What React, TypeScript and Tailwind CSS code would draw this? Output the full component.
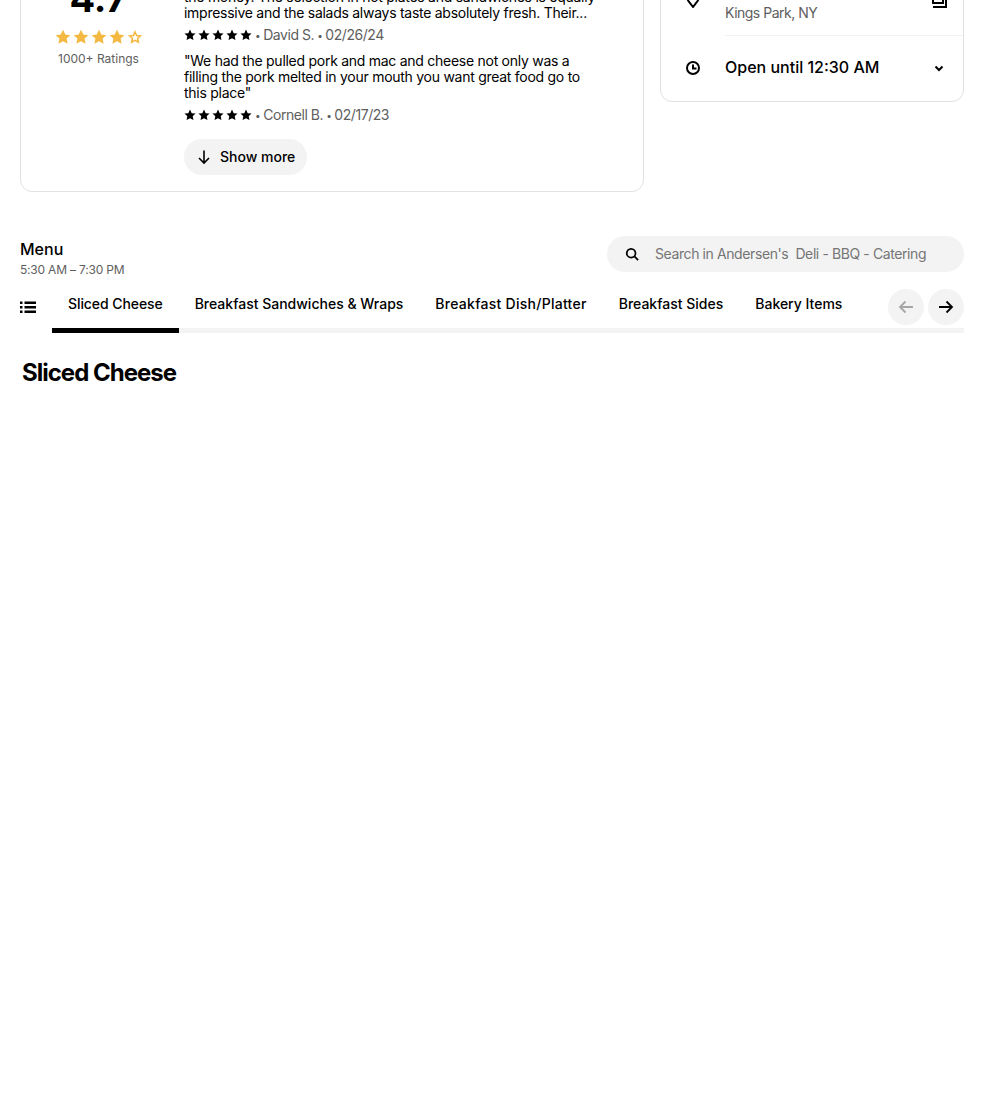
const Star = ({ className }: { className: string }) => (
  <svg viewBox="0 0 24 24" className={className} fill="currentColor">
    <path d="M12 1l3.400 7.300 7.600.9-5.600 5.200 1.500 7.800L12 18.300 5.100 22.200l1.500-7.800L1 9.200l7.600-.9z" />
  </svg>
);

const Meta = ({ name, date }: { name: string; date: string }) => (
  <div className="flex items-center h-4 mt-[6px] text-sm tracking-[-0.45px] text-[#5e5e5e]">
    <div className="flex gap-[2px] text-black">
      {[0, 1, 2, 3, 4].map((i) => (
        <Star key={i} className="w-3 h-3" />
      ))}
    </div>
    <span className="ml-[3px] mr-[3px] text-[10px]">•</span>
    <span>{name}</span>
    <span className="ml-[3px] mr-[3px] text-[10px]">•</span>
    <span>{date}</span>
  </div>
);

const tabs = ["Sliced Cheese", "Breakfast Sandwiches & Wraps", "Breakfast Dish/Platter", "Breakfast Sides", "Bakery Items"];

export default function App() {
  return (
    <div className="h-[1102px] overflow-hidden bg-white text-black font-['Inter','Liberation_Sans',sans-serif]">
      <div className="-mt-[60px] px-5">
        <div className="flex items-start gap-4">
          <div className="flex w-[624px] h-[252px] border border-[#e2e2e2] rounded-xl">
            <div className="w-[155px] shrink-0 flex flex-col items-center pt-[27px]">
              <div className="text-[38px] leading-[60px] font-bold">4.7</div>
              <div className="flex gap-[2px] mt-[1px] text-[#f4b942]">
                {[0, 1, 2, 3].map((i) => (
                  <Star key={i} className="w-4 h-4" />
                ))}
                <svg viewBox="0 0 24 24" className="w-4 h-4" fill="none" stroke="currentColor" strokeWidth="2.4">
                  <path d="M12 4.5l2.4 5.3 5.6.6-4.1 3.8 1.1 5.700L12 17.1l-5 2.8 1.1-5.7L4 10.400l5.600-.6z" />
                </svg>
              </div>
              <div className="mt-[6px] text-xs leading-4 text-[#5e5e5e]">1000+ Ratings</div>
            </div>
            <div className="pl-[8px] flex-1">
              <div className="pt-[48px] text-sm leading-4 tracking-[-0.27px] whitespace-nowrap">
                the money. The selection in hot plates and sandwiches is equally
                <br />
                impressive and the salads always taste absolutely fresh. Their...
              </div>
              <Meta name="David S." date="02/26/24" />
              <div className="mt-[10px] text-sm leading-4 tracking-[-0.27px] whitespace-nowrap">
                "We had the pulled pork and mac and cheese not only was a
                <br />
                filling the pork melted in your mouth you want great food go to
                <br />
                this place"
              </div>
              <Meta name="Cornell B." date="02/17/23" />
              <button className="mt-[16px] h-9 pl-3 pr-3 flex items-center gap-2 rounded-full bg-[#f3f3f3] text-sm font-medium">
                <svg viewBox="0 0 16 16" className="w-4 h-4" fill="none" stroke="black" strokeWidth="1.6">
                  <path d="M8 1.500v12M3 9l5 5 5-5" />
                </svg>
                Show more
              </button>
            </div>
          </div>
          <div className="w-[304px] h-[162px] border border-[#e2e2e2] rounded-xl">
            <div className="flex pl-[24px] pt-[52px]">
              <svg viewBox="0 0 16 16" className="w-4 h-4 -mt-[1px] shrink-0" fill="none" stroke="black" strokeWidth="2">
                <path d="M8 15L3.700 9.400a5.500 5.500 0 1 1 8.600 0z" />
                <circle cx="8" cy="6" r="1" />
              </svg>
              <div className="ml-[24px] flex-1">
                <div className="flex justify-between pr-4">
                  <div className="pt-[12px] text-sm leading-4 tracking-[-0.5px] text-[#5e5e5e]">Kings Park, NY</div>
                  <svg viewBox="0 0 16 16" className="w-4 h-4 -mt-[1px]" fill="none" stroke="black" strokeWidth="2">
                    <path d="M2 0v11h10V0" />
                    <path d="M15 3v12H2" />
                  </svg>
                </div>
                <div className="mt-[14px] border-b border-[#f3f3f3]" />
              </div>
            </div>
            <div className="flex items-center pl-[24px] pr-[18px] pb-[3px] h-[65px]">
              <svg viewBox="0 0 16 16" className="w-4 h-4 mt-[2px] shrink-0" fill="none" stroke="black" strokeWidth="2">
                <circle cx="8" cy="8" r="6" />
                <path d="M8 4.500V8.500H11.500" />
              </svg>
              <span className="ml-[24px] flex-1 font-medium">Open until 12:30 AM</span>
              <svg viewBox="0 0 12 12" className="w-3 h-3 mt-[1px]" fill="none" stroke="black" strokeWidth="2">
                <path d="M2.500 4.500L6 8l3.500-3.500" />
              </svg>
            </div>
          </div>
        </div>

        <div className="flex justify-between mt-[44px]">
          <div className="pt-[3px]">
            <div className="font-medium leading-5">Menu</div>
            <div className="text-xs leading-4 mt-[3px] tracking-[-0.2px] text-[#5e5e5e]">5:30 AM – 7:30 PM</div>
          </div>
          <div className="w-[357px] h-9 flex items-center pl-[18px] rounded-full bg-[#f3f3f3]">
            <svg viewBox="0 0 16 16" className="w-[14px] h-[14px]" fill="none" stroke="black" strokeWidth="2">
              <circle cx="7" cy="7" r="5" />
              <path d="M10.500 10.500L15 15" />
            </svg>
            <span className="ml-[16px] text-sm tracking-[-0.4px] whitespace-pre text-[#757575]">Search in Andersen's  Deli - BBQ - Catering</span>
          </div>
        </div>

        <div className="flex mt-[7px]">
          <svg viewBox="0 0 16 16" className="w-4 h-4 mt-[14px] mr-4 shrink-0" fill="black">
            <path d="M0 2.500h2.500v2.500H0zM0 7h2.500v2.500H0zM0 11.500h2.500V14H0zM4.500 2.500H16v2.500H4.500zM4.500 7H16v2.500H4.500zM4.500 11.500H16V14H4.500z" />
          </svg>
          <div className="flex-1 flex h-[48px] border-b-[5px] border-[#f3f3f3]">
            {tabs.map((t, i) => (
              <div
                key={t}
                className={
                  i === 0
                    ? "h-[48px] px-4 pt-[11px] text-sm leading-4 tracking-[-0.08px] font-medium border-b-[5px] border-black whitespace-nowrap"
                    : i === 2
                      ? "h-[48px] px-4 pt-[11px] text-sm leading-4 tracking-[0.27px] font-medium whitespace-nowrap"
                      : "h-[48px] px-4 pt-[11px] text-sm leading-4 font-medium whitespace-nowrap"
                }
              >
                {t}
              </div>
            ))}
            <div className="ml-auto flex gap-1 pt-[4px]">
              <div className="w-9 h-9 rounded-full bg-[#f3f3f3] flex items-center justify-center">
                <svg viewBox="0 0 16 16" className="w-4 h-4" fill="none" stroke="#a6a6a6" strokeWidth="1.800">
                  <path d="M15 8H2M7.500 2.500L2 8l5.500 5.500" />
                </svg>
              </div>
              <div className="w-9 h-9 rounded-full bg-[#f3f3f3] flex items-center justify-center">
                <svg viewBox="0 0 16 16" className="w-4 h-4" fill="none" stroke="black" strokeWidth="1.800">
                  <path d="M1 8h13M8.500 2.500L14 8l-5.500 5.500" />
                </svg>
              </div>
            </div>
          </div>
        </div>

        <h2 className="mt-[24px] ml-[2px] text-2xl leading-8 font-bold tracking-[-1px]">Sliced Cheese</h2>
      </div>
    </div>
  );
}
